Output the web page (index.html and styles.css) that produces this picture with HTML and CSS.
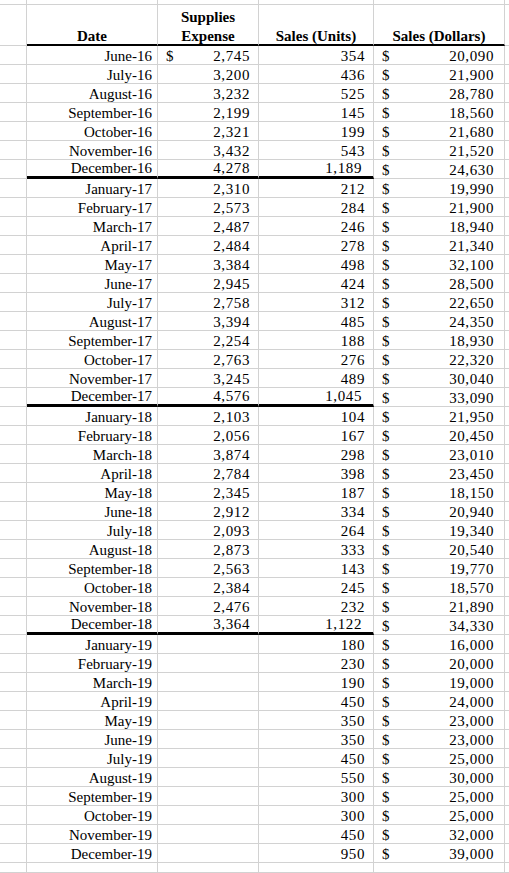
FILE: index.html
```html
<!DOCTYPE html>
<html>
<head>
<meta charset="utf-8">
<link rel="stylesheet" href="styles.css">
</head>
<body>
<table class="sheet">
<colgroup>
<col class="c-a"><col class="c-b"><col class="c-c"><col class="c-d"><col class="c-e"><col class="c-f">
</colgroup>
<tbody>
<tr class="r-top"><td></td><td></td><td></td><td></td><td></td><td></td></tr>
<tr class="r-head">
<td></td>
<th class="hcell"><div class="hd">Date</div></th>
<th class="hcell"><div class="hd">Supplies<br>Expense</div></th>
<th class="hcell"><div class="hd">Sales (Units)</div></th>
<th class="hcell"><div class="hd">Sales (Dollars)</div></th>
<td></td>
</tr>
<tr><td></td><td class="date">June-16</td><td class="exp"><div class="acct"><span>$</span><span>2,745</span></div></td><td class="units">354</td><td class="dollars"><div class="acct"><span>$</span><span>20,090</span></div></td><td></td></tr>
<tr><td></td><td class="date">July-16</td><td class="exp">3,200</td><td class="units">436</td><td class="dollars"><div class="acct"><span>$</span><span>21,900</span></div></td><td></td></tr>
<tr><td></td><td class="date">August-16</td><td class="exp">3,232</td><td class="units">525</td><td class="dollars"><div class="acct"><span>$</span><span>28,780</span></div></td><td></td></tr>
<tr><td></td><td class="date">September-16</td><td class="exp">2,199</td><td class="units">145</td><td class="dollars"><div class="acct"><span>$</span><span>18,560</span></div></td><td></td></tr>
<tr><td></td><td class="date">October-16</td><td class="exp">2,321</td><td class="units">199</td><td class="dollars"><div class="acct"><span>$</span><span>21,680</span></div></td><td></td></tr>
<tr><td></td><td class="date">November-16</td><td class="exp">3,432</td><td class="units">543</td><td class="dollars"><div class="acct"><span>$</span><span>21,520</span></div></td><td></td></tr>
<tr class="r-year"><td></td><td class="date">December-16</td><td class="exp">4,278</td><td class="units wide">1,189</td><td class="dollars"><div class="acct"><span>$</span><span>24,630</span></div></td><td></td></tr>
<tr><td></td><td class="date">January-17</td><td class="exp">2,310</td><td class="units">212</td><td class="dollars"><div class="acct"><span>$</span><span>19,990</span></div></td><td></td></tr>
<tr><td></td><td class="date">February-17</td><td class="exp">2,573</td><td class="units">284</td><td class="dollars"><div class="acct"><span>$</span><span>21,900</span></div></td><td></td></tr>
<tr><td></td><td class="date">March-17</td><td class="exp">2,487</td><td class="units">246</td><td class="dollars"><div class="acct"><span>$</span><span>18,940</span></div></td><td></td></tr>
<tr><td></td><td class="date">April-17</td><td class="exp">2,484</td><td class="units">278</td><td class="dollars"><div class="acct"><span>$</span><span>21,340</span></div></td><td></td></tr>
<tr><td></td><td class="date">May-17</td><td class="exp">3,384</td><td class="units">498</td><td class="dollars"><div class="acct"><span>$</span><span>32,100</span></div></td><td></td></tr>
<tr><td></td><td class="date">June-17</td><td class="exp">2,945</td><td class="units">424</td><td class="dollars"><div class="acct"><span>$</span><span>28,500</span></div></td><td></td></tr>
<tr><td></td><td class="date">July-17</td><td class="exp">2,758</td><td class="units">312</td><td class="dollars"><div class="acct"><span>$</span><span>22,650</span></div></td><td></td></tr>
<tr><td></td><td class="date">August-17</td><td class="exp">3,394</td><td class="units">485</td><td class="dollars"><div class="acct"><span>$</span><span>24,350</span></div></td><td></td></tr>
<tr><td></td><td class="date">September-17</td><td class="exp">2,254</td><td class="units">188</td><td class="dollars"><div class="acct"><span>$</span><span>18,930</span></div></td><td></td></tr>
<tr><td></td><td class="date">October-17</td><td class="exp">2,763</td><td class="units">276</td><td class="dollars"><div class="acct"><span>$</span><span>22,320</span></div></td><td></td></tr>
<tr><td></td><td class="date">November-17</td><td class="exp">3,245</td><td class="units">489</td><td class="dollars"><div class="acct"><span>$</span><span>30,040</span></div></td><td></td></tr>
<tr class="r-year"><td></td><td class="date">December-17</td><td class="exp">4,576</td><td class="units wide">1,045</td><td class="dollars"><div class="acct"><span>$</span><span>33,090</span></div></td><td></td></tr>
<tr><td></td><td class="date">January-18</td><td class="exp">2,103</td><td class="units">104</td><td class="dollars"><div class="acct"><span>$</span><span>21,950</span></div></td><td></td></tr>
<tr><td></td><td class="date">February-18</td><td class="exp">2,056</td><td class="units">167</td><td class="dollars"><div class="acct"><span>$</span><span>20,450</span></div></td><td></td></tr>
<tr><td></td><td class="date">March-18</td><td class="exp">3,874</td><td class="units">298</td><td class="dollars"><div class="acct"><span>$</span><span>23,010</span></div></td><td></td></tr>
<tr><td></td><td class="date">April-18</td><td class="exp">2,784</td><td class="units">398</td><td class="dollars"><div class="acct"><span>$</span><span>23,450</span></div></td><td></td></tr>
<tr><td></td><td class="date">May-18</td><td class="exp">2,345</td><td class="units">187</td><td class="dollars"><div class="acct"><span>$</span><span>18,150</span></div></td><td></td></tr>
<tr><td></td><td class="date">June-18</td><td class="exp">2,912</td><td class="units">334</td><td class="dollars"><div class="acct"><span>$</span><span>20,940</span></div></td><td></td></tr>
<tr><td></td><td class="date">July-18</td><td class="exp">2,093</td><td class="units">264</td><td class="dollars"><div class="acct"><span>$</span><span>19,340</span></div></td><td></td></tr>
<tr><td></td><td class="date">August-18</td><td class="exp">2,873</td><td class="units">333</td><td class="dollars"><div class="acct"><span>$</span><span>20,540</span></div></td><td></td></tr>
<tr><td></td><td class="date">September-18</td><td class="exp">2,563</td><td class="units">143</td><td class="dollars"><div class="acct"><span>$</span><span>19,770</span></div></td><td></td></tr>
<tr><td></td><td class="date">October-18</td><td class="exp">2,384</td><td class="units">245</td><td class="dollars"><div class="acct"><span>$</span><span>18,570</span></div></td><td></td></tr>
<tr><td></td><td class="date">November-18</td><td class="exp">2,476</td><td class="units">232</td><td class="dollars"><div class="acct"><span>$</span><span>21,890</span></div></td><td></td></tr>
<tr class="r-year"><td></td><td class="date">December-18</td><td class="exp">3,364</td><td class="units wide">1,122</td><td class="dollars"><div class="acct"><span>$</span><span>34,330</span></div></td><td></td></tr>
<tr><td></td><td class="date">January-19</td><td class="exp"></td><td class="units">180</td><td class="dollars"><div class="acct"><span>$</span><span>16,000</span></div></td><td></td></tr>
<tr><td></td><td class="date">February-19</td><td class="exp"></td><td class="units">230</td><td class="dollars"><div class="acct"><span>$</span><span>20,000</span></div></td><td></td></tr>
<tr><td></td><td class="date">March-19</td><td class="exp"></td><td class="units">190</td><td class="dollars"><div class="acct"><span>$</span><span>19,000</span></div></td><td></td></tr>
<tr><td></td><td class="date">April-19</td><td class="exp"></td><td class="units">450</td><td class="dollars"><div class="acct"><span>$</span><span>24,000</span></div></td><td></td></tr>
<tr><td></td><td class="date">May-19</td><td class="exp"></td><td class="units">350</td><td class="dollars"><div class="acct"><span>$</span><span>23,000</span></div></td><td></td></tr>
<tr><td></td><td class="date">June-19</td><td class="exp"></td><td class="units">350</td><td class="dollars"><div class="acct"><span>$</span><span>23,000</span></div></td><td></td></tr>
<tr><td></td><td class="date">July-19</td><td class="exp"></td><td class="units">450</td><td class="dollars"><div class="acct"><span>$</span><span>25,000</span></div></td><td></td></tr>
<tr><td></td><td class="date">August-19</td><td class="exp"></td><td class="units">550</td><td class="dollars"><div class="acct"><span>$</span><span>30,000</span></div></td><td></td></tr>
<tr><td></td><td class="date">September-19</td><td class="exp"></td><td class="units">300</td><td class="dollars"><div class="acct"><span>$</span><span>25,000</span></div></td><td></td></tr>
<tr><td></td><td class="date">October-19</td><td class="exp"></td><td class="units">300</td><td class="dollars"><div class="acct"><span>$</span><span>25,000</span></div></td><td></td></tr>
<tr><td></td><td class="date">November-19</td><td class="exp"></td><td class="units">450</td><td class="dollars"><div class="acct"><span>$</span><span>32,000</span></div></td><td></td></tr>
<tr><td></td><td class="date">December-19</td><td class="exp"></td><td class="units">950</td><td class="dollars"><div class="acct"><span>$</span><span>39,000</span></div></td><td></td></tr>
<tr class="r-bottom"><td></td><td></td><td></td><td></td><td></td><td></td></tr>
</tbody>
</table>
</body>
</html>
```
FILE: styles.css
```css
html, body {
  margin: 0;
  padding: 0;
  background: #ffffff;
}

.sheet {
  width: 509px;
  table-layout: fixed;
  border-collapse: separate;
  border-spacing: 0;
  font-family: "Liberation Serif", "Times New Roman", serif;
  font-size: 15px;
  color: #000000;
}

.c-a { width: 27px; }
.c-b { width: 131px; }
.c-c { width: 101px; }
.c-d { width: 115px; }
.c-e { width: 131px; }
.c-f { width: 4px; }

.sheet tr { height: 19px; }
.sheet tr.r-top { height: 5px; }
.sheet tr.r-head { height: 41px; }
.sheet tr.r-bottom { height: 10px; }

.sheet td,
.sheet th {
  box-sizing: border-box;
  padding: 0;
  border-right: 1px solid #d2d2d2;
  border-bottom: 1px solid #d2d2d2;
  vertical-align: bottom;
  line-height: 15px;
  white-space: nowrap;
  overflow: visible;
}

.sheet td:last-child { border-right: none; }

.hcell {
  font-weight: bold;
  text-align: center;
}

.sheet .r-head .hcell {
  border-bottom: 2px solid #000000;
}

.hd {
  line-height: 19px;
  margin-bottom: -2px;
}

.date {
  text-align: right;
  padding-right: 5px !important;
}

.exp,
.units,
.dollars {
  letter-spacing: 0.6px;
}

.exp {
  text-align: right;
  padding-left: 8px !important;
  padding-right: 8px !important;
}

.units {
  text-align: right;
  padding-right: 8px !important;
}

.units.wide {
  padding-right: 11px !important;
}

.dollars {
  padding-left: 8px !important;
  padding-right: 10px !important;
}

.acct {
  display: flex;
  justify-content: space-between;
}

.sheet .r-year .date,
.sheet .r-year .exp,
.sheet .r-year .units {
  border-bottom: 3px solid #000000;
}
```
